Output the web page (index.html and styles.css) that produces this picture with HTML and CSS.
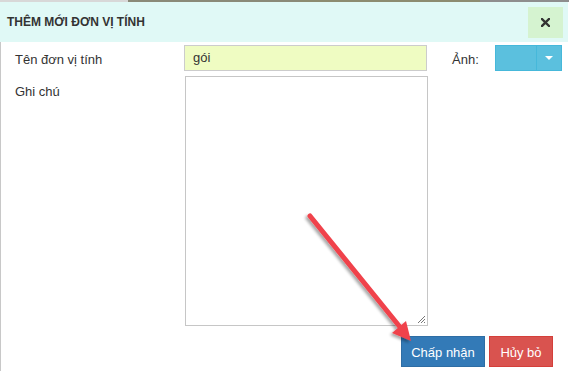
FILE: index.html
```html
<!DOCTYPE html>
<html lang="vi">
<head>
<meta charset="utf-8">
<title>Thêm mới đơn vị tính</title>
<link rel="stylesheet" href="styles.css">
</head>
<body>
<div class="page">
  <div class="topstrip"></div>
  <div class="header">
    <div class="title">THÊM MỚI ĐƠN VỊ TÍNH</div>
    <div class="close">
      <svg width="9" height="9" viewBox="0 0 9 9"><path d="M1 1L8 8M8 1L1 8" stroke="#333" stroke-width="2.4" stroke-linecap="square"/></svg>
    </div>
  </div>
  <div class="content">
    <div class="row row-name">
      <div class="label label-name">Tên đơn vị tính</div>
      <div class="input">gói</div>
      <div class="anh">Ảnh:</div>
      <div class="dropdown">
        <div class="dd-main"></div>
        <div class="dd-caret"><span class="caret"></span></div>
      </div>
    </div>
    <div class="row row-note">
      <div class="label label-note">Ghi chú</div>
      <div class="textarea">
        <svg class="grip" width="9" height="9" viewBox="0 0 9 9"><path d="M8 1L1 8M8 4L4 8M8 7L7 8" stroke="#777" stroke-width="1"/></svg>
      </div>
    </div>
    <div class="actions">
      <div class="btn btn-primary">Chấp nhận</div>
      <div class="btn btn-danger">Hủy bỏ</div>
    </div>
  </div>
  <svg class="arrow" width="569" height="371" viewBox="0 0 569 371">
    <defs>
      <filter id="sh" x="-20%" y="-20%" width="140%" height="140%">
        <feGaussianBlur in="SourceAlpha" stdDeviation="1.5"/>
        <feOffset dx="-2" dy="2" result="b"/>
        <feComponentTransfer><feFuncA type="linear" slope="0.35"/></feComponentTransfer>
        <feMerge><feMergeNode/><feMergeNode in="SourceGraphic"/></feMerge>
      </filter>
    </defs>
    <g filter="url(#sh)">
      <line x1="310" y1="216" x2="400" y2="327" stroke="#f0434b" stroke-width="5" stroke-linecap="round"/>
      <polygon points="411,341 392,333 406,321" fill="#f0434b"/>
    </g>
  </svg>
</div>
</body>
</html>
```
FILE: styles.css
```css
html, body {
  margin: 0;
  padding: 0;
  background: #fff;
}
.page {
  position: relative;
  width: 569px;
  height: 371px;
  overflow: hidden;
  font-family: "Liberation Sans", Arial, sans-serif;
  color: #333;
}
.topstrip {
  height: 2px;
  background: linear-gradient(to right, #d8d8d8 0, #d8d8d8 128px, #8a8a78 128px, #8a8a78 300px, #8c8c70 300px, #8c8c70 480px, #8e8e8e 480px);
}
.header {
  height: 40px;
  background: #e0f9f6;
  display: flex;
  align-items: center;
  justify-content: space-between;
  padding: 0 5px 0 7px;
  margin-right: 1px;
}
.title {
  font-size: 12px;
  font-weight: bold;
  color: #333;
  margin-top: -1px;
}
.close {
  width: 35px;
  height: 31px;
  background: #d5f3d0;
  display: flex;
  align-items: center;
  justify-content: center;
  margin-top: 1px;
}
.content {
  border-left: 1px solid #c8c8c8;
  height: 329px;
  padding-top: 3px;
  box-sizing: border-box;
}
.row {
  display: flex;
}
.row-name {
  align-items: center;
}
.label {
  width: 183px;
  padding-left: 14px;
  box-sizing: border-box;
  font-size: 13px;
  color: #333;
}
.label-name {
  margin-top: 3px;
}
.input {
  width: 243px;
  height: 26px;
  box-sizing: border-box;
  border: 1px solid #ccc;
  background: #effcc2;
  font-size: 13px;
  line-height: 24px;
  padding-left: 8px;
  color: #333;
}
.anh {
  margin-left: 25px;
  width: 43px;
  font-size: 13px;
  margin-top: 2px;
}
.dropdown {
  width: 67px;
  height: 26px;
  box-sizing: border-box;
  background: #5bc0de;
  border: 1px solid #46b8da;
  display: flex;
}
.dd-main {
  width: 40px;
  border-right: 1px solid #46b8da;
}
.dd-caret {
  flex: 1;
  display: flex;
  align-items: center;
  justify-content: center;
}
.caret {
  width: 0;
  height: 0;
  border-left: 4px solid transparent;
  border-right: 4px solid transparent;
  border-top: 4px solid #fff;
}
.row-note {
  margin-top: 5px;
  align-items: flex-start;
}
.label-note {
  padding-top: 8px;
}
.textarea {
  width: 243px;
  height: 250px;
  margin-left: 1px;
  box-sizing: border-box;
  border: 1px solid #c6c6c6;
  background: #fff;
  position: relative;
}
.grip {
  position: absolute;
  right: 1px;
  bottom: 1px;
}
.actions {
  display: flex;
  justify-content: flex-end;
  gap: 4px;
  margin-top: 10px;
  padding-right: 16px;
}
.btn {
  height: 31px;
  box-sizing: border-box;
  display: flex;
  align-items: center;
  justify-content: center;
  color: #fff;
  font-size: 13px;
  padding-top: 1px;
}
.btn-primary {
  width: 84px;
  background: #337ab7;
  border: 1px solid #2e6da4;
}
.btn-danger {
  width: 64px;
  background: #d9534f;
  border: 1px solid #d43f3a;
}
.arrow {
  position: absolute;
  left: 0;
  top: 0;
  pointer-events: none;
}
```
